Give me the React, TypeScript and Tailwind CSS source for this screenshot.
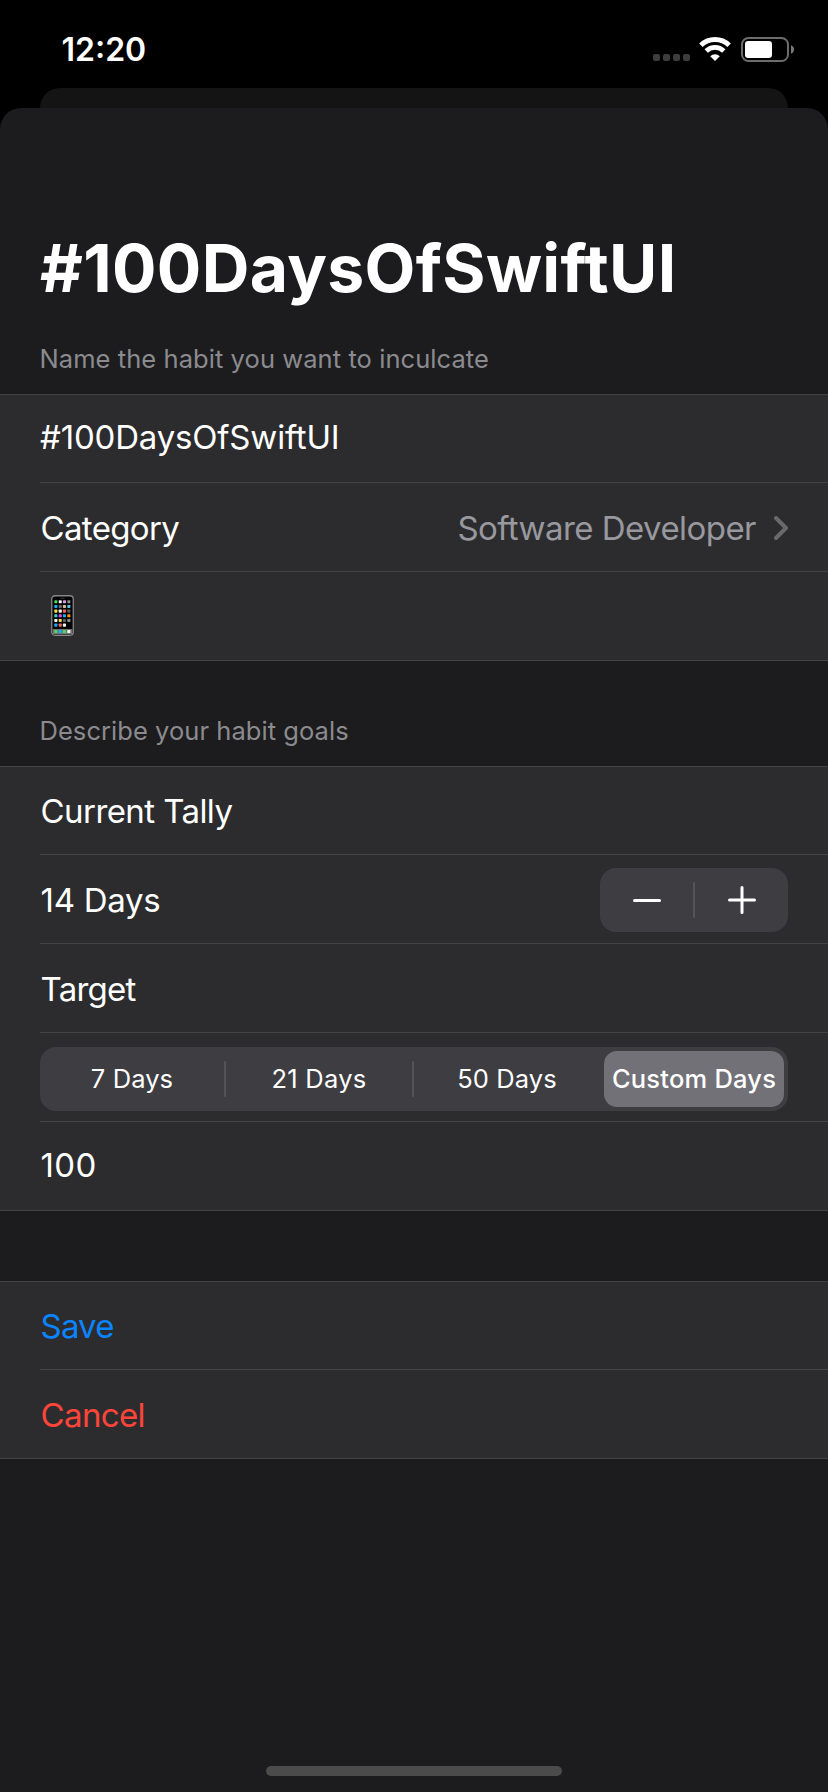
import React from "react";

function StatusBar() {
  return (
    <div className="flex h-[88px] items-start justify-between pl-[61.5px] pr-[34px]">
      <span className="mt-[30px] text-[32px] font-semibold leading-[40px] text-white">12:20</span>
      <div className="mt-[37px] flex items-start">
        <div className="mt-[17px] flex gap-[3px]">
          {[0, 1, 2, 3].map((dot) => (
            <span key={dot} className="size-[7px] rounded-[2px] bg-[#3d3d3d]" />
          ))}
        </div>
        <svg className="ml-[9px]" width="32" height="25" viewBox="0 0 32 25" fill="none" stroke="#fff">
          <path d="M1.9 8.3A20.2 20.2 0 0 1 30.1 8.3" strokeWidth="5" />
          <path d="M7.2 14A12.6 12.6 0 0 1 24.8 14" strokeWidth="4.8" />
          <path d="M16 24.1L11.2 19.2A6.9 6.9 0 0 1 20.8 19.2Z" fill="#fff" stroke="none" />
        </svg>
        <svg className="ml-[10px]" width="53" height="25" viewBox="0 0 53 25">
          <rect x="1" y="1" width="46" height="23" rx="6.5" fill="none" stroke="#6c6c6c" strokeWidth="2" />
          <rect x="4" y="4" width="27" height="17" rx="3.2" fill="#fff" />
          <path d="M50 8.3C52 9 53 10.6 53 12.5C53 14.4 52 16 50 16.7Z" fill="#7a7a7a" />
        </svg>
      </div>
    </div>
  );
}

function Row({ first, last, align, children }: {
  first?: boolean;
  last?: boolean;
  align?: string;
  children: React.ReactNode;
}) {
  const height = first ? "h-[88px]" : "h-[89px]";
  const edge = last ? "pl-10" : "ml-10";
  return (
    <div className={`flex items-center justify-between border-b border-[#434345] pr-10 ${height} ${edge} ${align ?? "pt-[2px]"}`}>
      {children}
    </div>
  );
}

function Section({ children }: { children: React.ReactNode }) {
  return (
    <section className="border-t border-[#434345] bg-[#2c2c2e] text-[33px] leading-[40px] text-white">
      {children}
    </section>
  );
}

const SCREEN = ["#4cd964", "#f4f4f4", "#d99be8", "#8e8e93", "#1badf8", "#6b6b6e", "#d9b99b", "#5ac8e8", "#f7dc4a", "#f4f4f4", "#f0625a", "#5f5f62", "#3fd0d8", "#d950e0", "#1badf8", "#ff9500", "#f4f4f4", "#f2d850", "#5f5f62", "#8e8e93", "#1badf8", "#f0625a", "#f4f4f4"];
const DOCK = ["#4cd964", "#1badf8", "#4cd964", "#f4f4f4"];
const COLUMNS = [3.5, 7.9, 12.1, 16.5];

function PhoneIcon() {
  return (
    <svg className="ml-[11px]" width="23" height="41" viewBox="0 0 23 41">
      <rect x="0.75" y="0.75" width="21.5" height="39.5" rx="3.2" fill="#030303" stroke="#858785" strokeWidth="1.3" />
      <path d="M9.5 3.3h4" stroke="#333" />
      <rect x="1.6" y="34" width="19.8" height="5" fill="#6f7470" />
      {SCREEN.map((color, i) => (
        <rect key={i} x={COLUMNS[i % 4] - 0.2} y={5.2 + Math.floor(i / 4) * 4.68} width="3.1" height="3.1" rx="0.7" fill={color} />
      ))}
      {DOCK.map((color, i) => (
        <rect key={i} x={COLUMNS[i] - 0.2} y="35" width="3.1" height="3.1" rx="0.7" fill={color} />
      ))}
    </svg>
  );
}

function Stepper() {
  return (
    <div className="flex h-16 w-[188px] items-center rounded-[16px] bg-[#3e3d42]">
      <button className="flex flex-1 justify-center" aria-label="Decrement">
        <svg width="28" height="28" viewBox="0 0 28 28" stroke="#fff" strokeWidth="3" strokeLinecap="round">
          <path d="M1.5 14.4h25" />
        </svg>
      </button>
      <span className="h-9 w-[2px] rounded-full bg-[#545458]" />
      <button className="flex flex-1 justify-center" aria-label="Increment">
        <svg width="28" height="28" viewBox="0 0 28 28" stroke="#fff" strokeWidth="3" strokeLinecap="round">
          <path d="M1.5 14h25M14 1.5v25" />
        </svg>
      </button>
    </div>
  );
}

function SegmentedControl() {
  return (
    <div className="flex h-16 w-[748px] items-center rounded-[16px] bg-[#3e3d42] text-[25.5px] leading-[30px]">
      <span className="w-[184px] text-center tracking-[0.1px]">7 Days</span>
      <span className="h-9 w-[2px] rounded-full bg-[#545458]" />
      <span className="w-[186px] text-center tracking-[0.28px]">21 Days</span>
      <span className="h-9 w-[2px] rounded-full bg-[#545458]" />
      <span className="w-[186px] text-center tracking-[0.1px]">50 Days</span>
      <span className="m-1 flex h-14 w-[180px] items-center justify-center whitespace-nowrap rounded-[13px] bg-[#727177] font-medium tracking-[0.2px]">
        Custom Days
      </span>
    </div>
  );
}

export default function App() {
  return (
    <div className="flex h-[1792px] w-[828px] flex-col bg-black font-['Inter',sans-serif]">
      <StatusBar />
      <div className="mx-10 h-5 rounded-t-[20px] bg-[#141414]" />
      <main className="flex flex-1 flex-col rounded-t-[21px] bg-[#1c1c1e]">
        <h1 className="ml-10 mt-[120px] text-[66px] font-bold leading-[80px] tracking-[0.337px] text-white">
          #100DaysOfSwiftUI
        </h1>
        <h2 className="mb-5 ml-[39.5px] mt-9 text-[25.5px] leading-[30px] tracking-[0.07px] text-[#8b8b8f]">
          Name the habit you want to inculcate
        </h2>
        <Section>
          <Row first align="pb-[4px]">
            <span className="tracking-[-0.19px]">#100DaysOfSwiftUI</span>
          </Row>
          <Row>
            <span className="ml-[0.6px] tracking-[-0.68px]">Category</span>
            <span className="flex items-center gap-[14px] text-[#98989f]">
              <span className="tracking-[-0.549px]">Software Developer</span>
              <svg width="18" height="28" viewBox="0 0 18 28" fill="none" stroke="#69696c" strokeWidth="4" strokeLinecap="round" strokeLinejoin="round">
                <path d="M6 4L16 14L6 24" />
              </svg>
            </span>
          </Row>
          <Row last align="pb-[2px]">
            <PhoneIcon />
          </Row>
        </Section>
        <h2 className="mb-5 ml-[39.5px] mt-[55px] text-[25.5px] leading-[30px] tracking-[0.05px] text-[#8b8b8f]">
          Describe your habit goals
        </h2>
        <Section>
          <Row first align="pt-px">
            <span className="ml-[0.6px] tracking-[-0.58px]">Current Tally</span>
          </Row>
          <Row>
            <span className="ml-[0.5px] tracking-[-0.272px]">14 Days</span>
            <Stepper />
          </Row>
          <Row>
            <span className="ml-[0.5px] tracking-[-0.75px]">Target</span>
          </Row>
          <Row align="pt-1">
            <SegmentedControl />
          </Row>
          <Row last align="pb-[2px]">
            <span className="ml-[0.5px] tracking-[0.38px]">100</span>
          </Row>
        </Section>
        <div className="h-[70px]" />
        <Section>
          <Row first align="pt-px">
            <span className="ml-[0.6px] tracking-[-0.85px] text-[#0a84ff]">Save</span>
          </Row>
          <Row last>
            <span className="ml-[0.6px] tracking-[-0.645px] text-[#ff453a]">Cancel</span>
          </Row>
        </Section>
        <div className="mx-auto mb-4 mt-auto h-[10px] w-[296px] rounded-full bg-[#4b4b4b]" />
      </main>
    </div>
  );
}
